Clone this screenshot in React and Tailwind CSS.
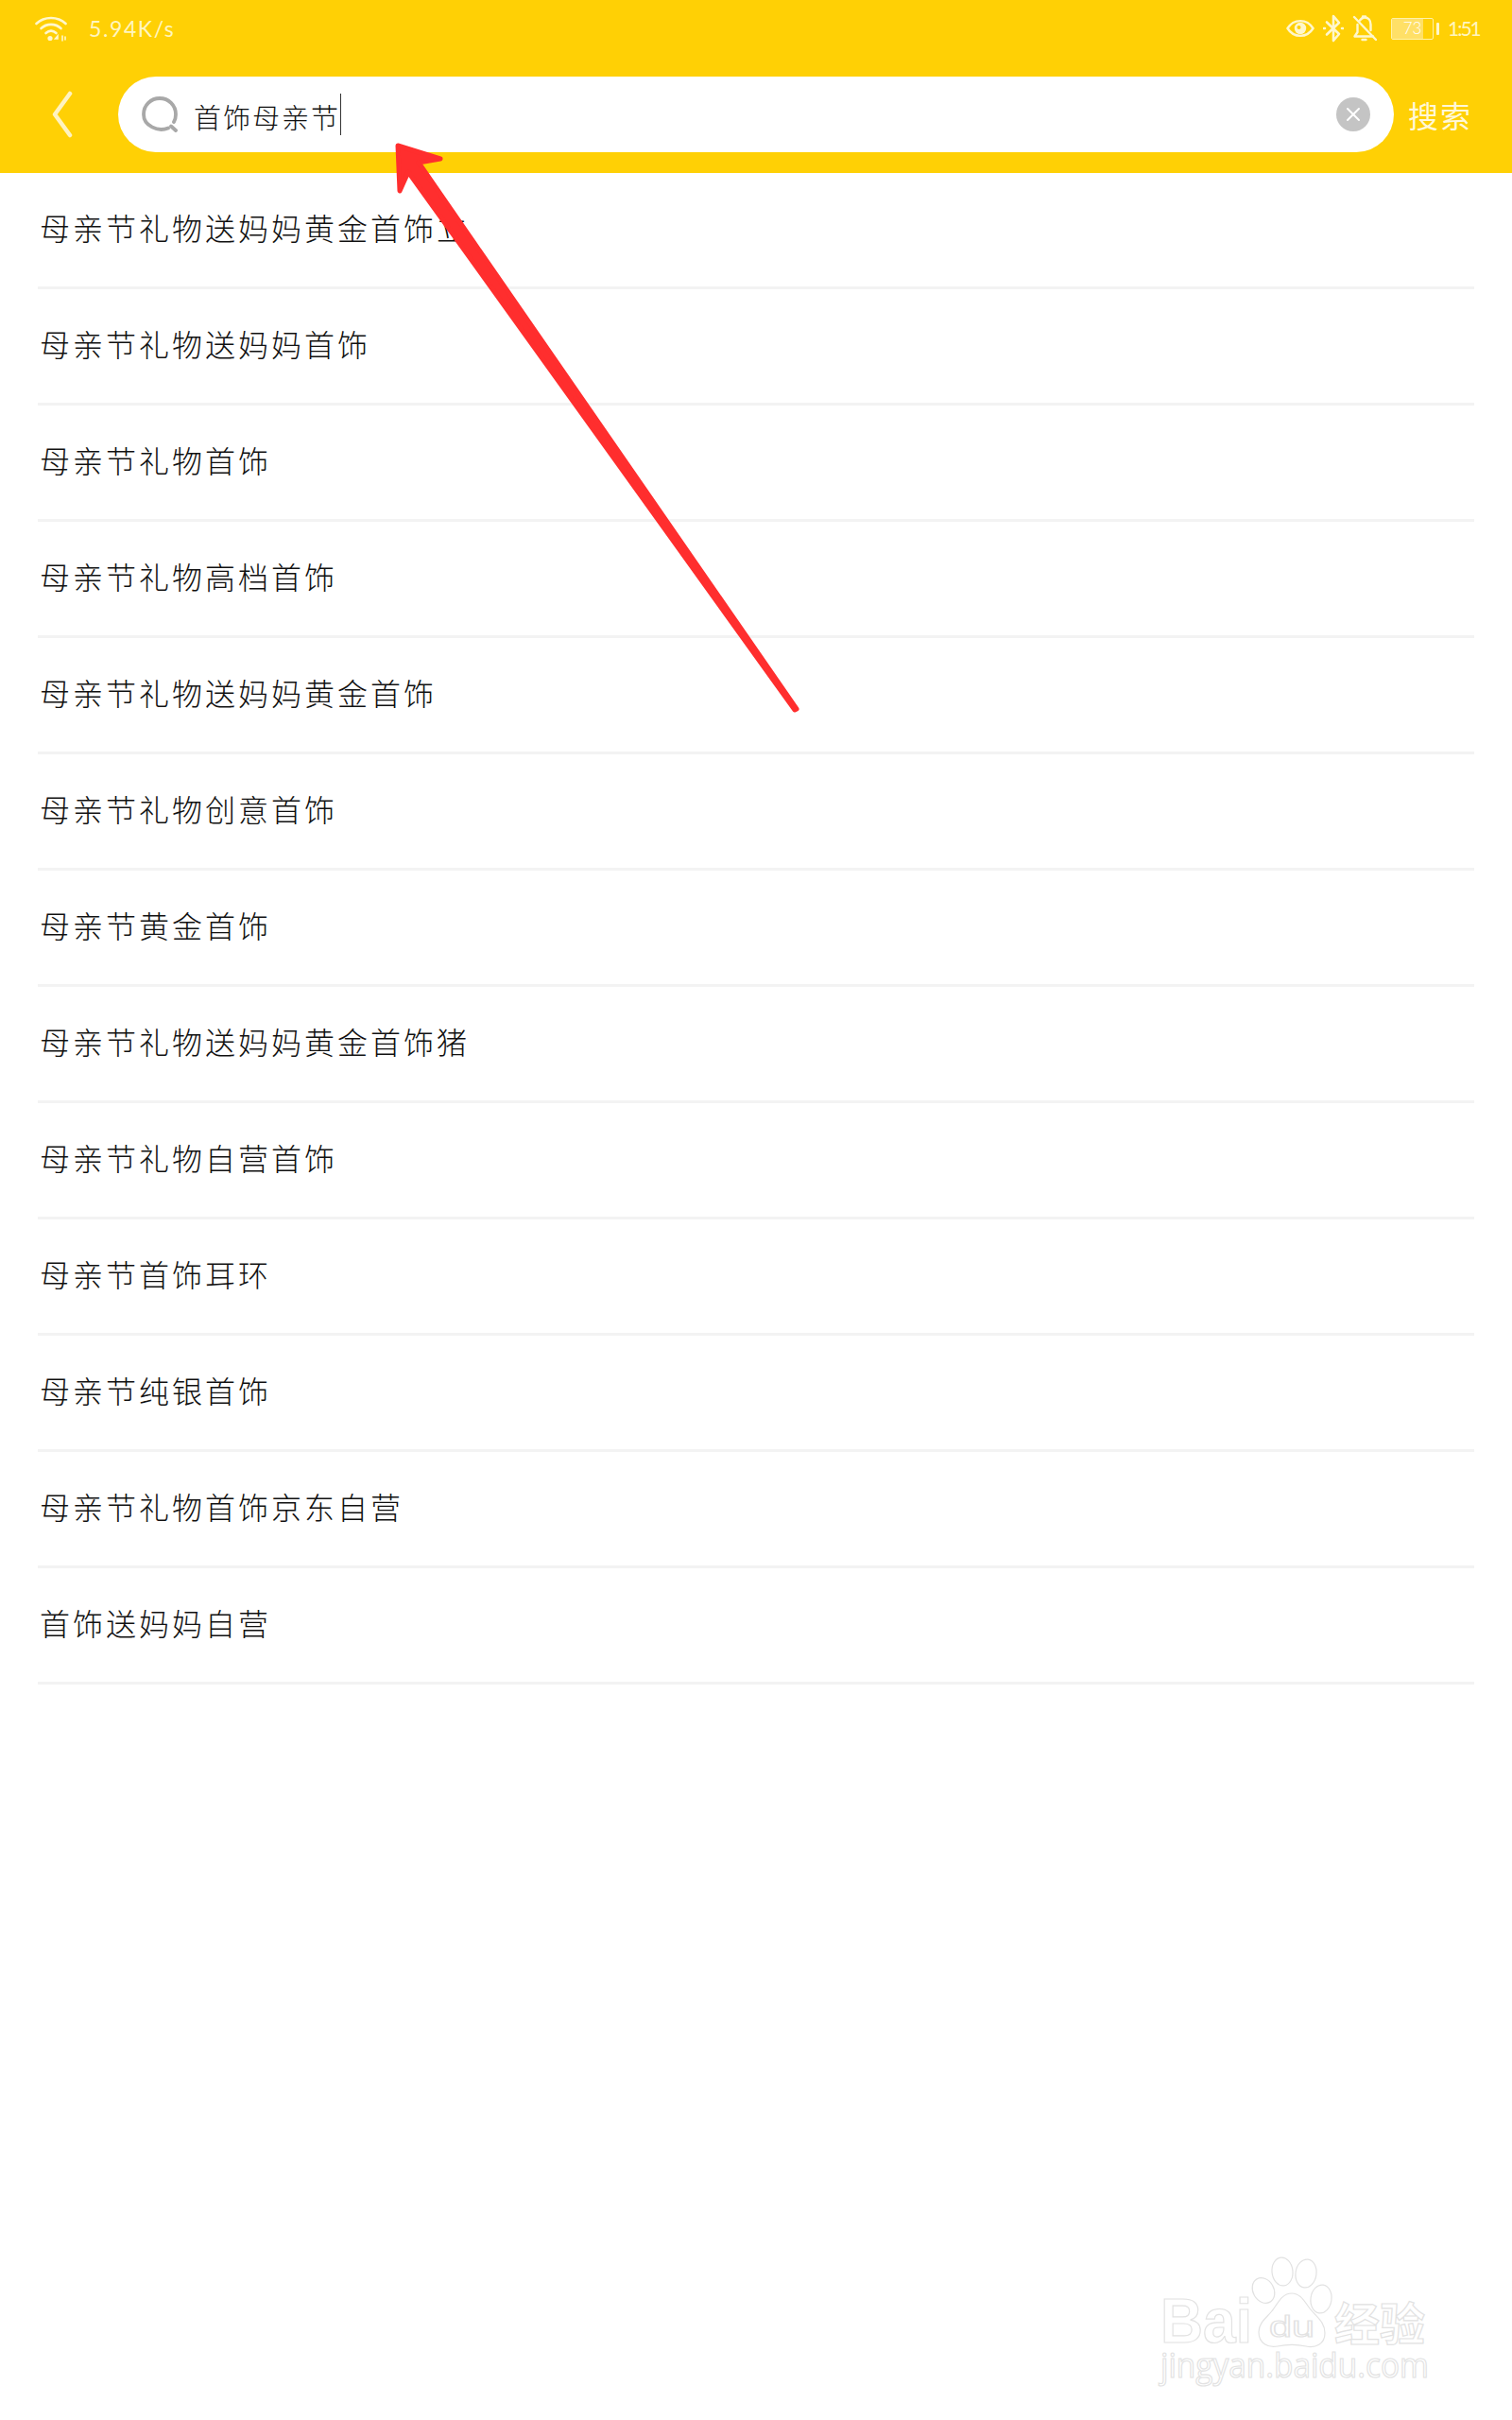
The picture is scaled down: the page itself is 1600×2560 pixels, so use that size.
import { X } from "lucide-react";

const suggestions = [
  "母亲节礼物送妈妈黄金首饰立",
  "母亲节礼物送妈妈首饰",
  "母亲节礼物首饰",
  "母亲节礼物高档首饰",
  "母亲节礼物送妈妈黄金首饰",
  "母亲节礼物创意首饰",
  "母亲节黄金首饰",
  "母亲节礼物送妈妈黄金首饰猪",
  "母亲节礼物自营首饰",
  "母亲节首饰耳环",
  "母亲节纯银首饰",
  "母亲节礼物首饰京东自营",
  "首饰送妈妈自营",
];

const cjk = "font-['Noto_Sans_CJK_SC','Noto_Sans',sans-serif]";

const WifiIcon = () => (
  <svg width="34" height="28" viewBox="0 0 34 28" fill="none" stroke="#fff7cc" strokeWidth="2.6" strokeLinecap="round">
    <path d="M1.5 9C10 1 24 1 32.5 9" />
    <path d="M6.5 14C12.5 8.5 21.5 8.5 27.5 14" />
    <path d="M11.5 19C15 16 19 16 22.5 19" />
    <circle cx="16" cy="24.5" r="2.6" fill="#fff7cc" stroke="none" />
    <path d="M24 22l-2.5 3h2.5zM29 22v5M32 23v3" strokeWidth="1.6" />
  </svg>
);

const EyeIcon = () => (
  <svg width="30" height="24" viewBox="0 0 30 24" fill="none" stroke="#fff7cc" strokeWidth="2.4">
    <path d="M1.5 12C8 1.5 22 1.5 28.5 12C22 22.5 8 22.5 1.5 12Z" />
    <circle cx="15" cy="12" r="5" fill="#fff7cc" />
    <circle cx="13.5" cy="11" r="2" fill="#ffd005" stroke="none" />
  </svg>
);

const BluetoothIcon = () => (
  <svg width="22" height="30" viewBox="0 0 22 30" fill="none" stroke="#fff7cc" strokeWidth="2.6" strokeLinecap="round" strokeLinejoin="round">
    <path d="M4 8.5L17 21L11 28V2L17 9L4 21.5" />
    <path d="M1 15h1M20 15h1" />
  </svg>
);

const BellOffIcon = () => (
  <svg width="26" height="30" viewBox="0 0 26 30" fill="none" stroke="#fff7cc" strokeWidth="2.4" strokeLinecap="round" strokeLinejoin="round">
    <path d="M8 6.5C9.5 4.5 11 3.5 13 3.5C17 3.5 19.5 6.5 19.5 11V17M5.5 11V19L2.5 23.5H22" />
    <path d="M11 2.5h3M10.5 27h4" />
    <path d="M2 3L25 27" />
  </svg>
);

const Battery = () => (
  <div className="flex items-center gap-[3px]">
    <div className="relative h-[23px] w-[45px] rounded-[2px] border border-[#fff2a8] bg-[#ffd005]">
      <div className="h-full w-[33px] bg-[#ffe067]" />
      <span className="absolute inset-0 flex items-center justify-center font-['Lato',sans-serif] text-[17px] font-light text-white">73</span>
    </div>
    <div className="h-[13px] w-[3px] rounded-[1px] bg-[#fff7cc]" />
  </div>
);

const SearchIcon = () => (
  <svg width="38" height="38" viewBox="0 0 38 38" fill="none" stroke="#a8a8a8" strokeWidth="3.8" strokeLinecap="round">
    <path d="M28 33.5C17 38 2 31 2 19C2 9.5 9.5 2 19 2C28.5 2 36 9.5 36 19C36 22 35.5 24.5 34 27" />
    <path d="M31 31.5L36 36" />
  </svg>
);

const Watermark = () => (
  <svg className="pointer-events-none absolute left-[1220px] top-[2380px]" width="310" height="160" viewBox="0 0 310 160" fill="#ffffff" stroke="#e2e2e2" strokeWidth="1.2">
    <ellipse cx="137" cy="23" rx="11" ry="15" transform="rotate(-6 137 23)" />
    <ellipse cx="162" cy="25" rx="11" ry="15" transform="rotate(8 162 25)" />
    <ellipse cx="117" cy="43" rx="11" ry="14" transform="rotate(-30 117 43)" />
    <ellipse cx="178" cy="52" rx="11" ry="15" transform="rotate(8 178 52)" />
    <path d="M147 46C156 46 160 54 166 62C173 71 182 76 182 88C182 100 172 104 162 102C153 100 141 100 132 102C122 104 112 99 112 87C112 76 122 71 128 62C134 53 138 46 147 46Z" />
    <text x="8" y="98" fontFamily="Liberation Sans, sans-serif" fontSize="66" fontWeight="700" textLength="97" lengthAdjust="spacingAndGlyphs">Bai</text>
    <text x="123" y="92" fontFamily="Liberation Sans, sans-serif" fontSize="31" textLength="48" lengthAdjust="spacingAndGlyphs">du</text>
    <text x="192" y="96" fontFamily="Noto Sans CJK SC, sans-serif" fontSize="48" fontWeight="700">经验</text>
    <text x="8" y="135" fontFamily="Open Sans, sans-serif" fontSize="36" textLength="284" lengthAdjust="spacingAndGlyphs">jingyan.baidu.com</text>
  </svg>
);

export default function App() {
  return (
    <div className={`relative h-[2560px] w-[1600px] overflow-hidden bg-white ${cjk}`}>
      <header className="h-[183px] bg-[#ffd005]">
        <div className="flex h-[60px] items-center justify-between pl-[37px] pr-[36px]">
          <div className="flex items-center gap-[23px]">
            <WifiIcon />
            <span className="font-['Lato',sans-serif] text-[23px] tracking-[1.6px] text-[#fff6c0]">5.94K/s</span>
          </div>
          <div className="flex items-center">
            <EyeIcon />
            <div className="ml-[9px]"><BluetoothIcon /></div>
            <div className="ml-[9px]"><BellOffIcon /></div>
            <div className="ml-[15px]"><Battery /></div>
            <span className="ml-[9px] w-[32px] font-['Lato',sans-serif] text-[21px] tracking-[-2px] text-[#fff6c0]">1:51</span>
          </div>
        </div>
        <div className="mt-[21px] flex h-[80px] items-center">
          <div className="flex w-[125px] justify-start pl-[54px]">
            <svg width="24" height="50" viewBox="0 0 24 50" fill="none" stroke="#fff3c0" strokeWidth="4.5" strokeLinecap="round" strokeLinejoin="round">
              <path d="M20 3L4 25L20 47" />
            </svg>
          </div>
          <div className="flex h-[80px] w-[1350px] items-center rounded-full bg-white pl-[25px] pr-[25px]">
            <SearchIcon />
            <span className="ml-[17px] pt-[4px] text-[29px] font-light leading-none tracking-[2px] text-[#111111]">首饰母亲节</span>
            <div className="h-[44px] w-px bg-[#333333]" />
            <div className="ml-auto flex h-[36px] w-[36px] items-center justify-center rounded-full bg-[#c4c4c4]">
              <X size={24} strokeWidth={2} color="#ffffff" />
            </div>
          </div>
          <span className="ml-[15px] text-[32px] leading-none tracking-[2px] text-[#fff8d8]">搜索</span>
        </div>
      </header>

      <ul className="px-[40px]">
        {suggestions.map((s) => (
          <li key={s} className="flex h-[123px] items-center border-b-[3px] border-[#f3f3f3] pb-[6px]">
            <span className="pl-[2px] text-[32px] font-light leading-none tracking-[3px] text-[#111111]">{s}</span>
          </li>
        ))}
      </ul>

      <svg className="pointer-events-none absolute inset-0" width="1600" height="2560" viewBox="0 0 1600 2560">
        <path
          d="M421 154L466 168L443 172L843 750L841 751L432 182L423 202Z"
          fill="#ff2e2e"
          stroke="#ff2e2e"
          strokeWidth="5"
          strokeLinejoin="round"
        />
      </svg>

      <Watermark />
    </div>
  );
}
